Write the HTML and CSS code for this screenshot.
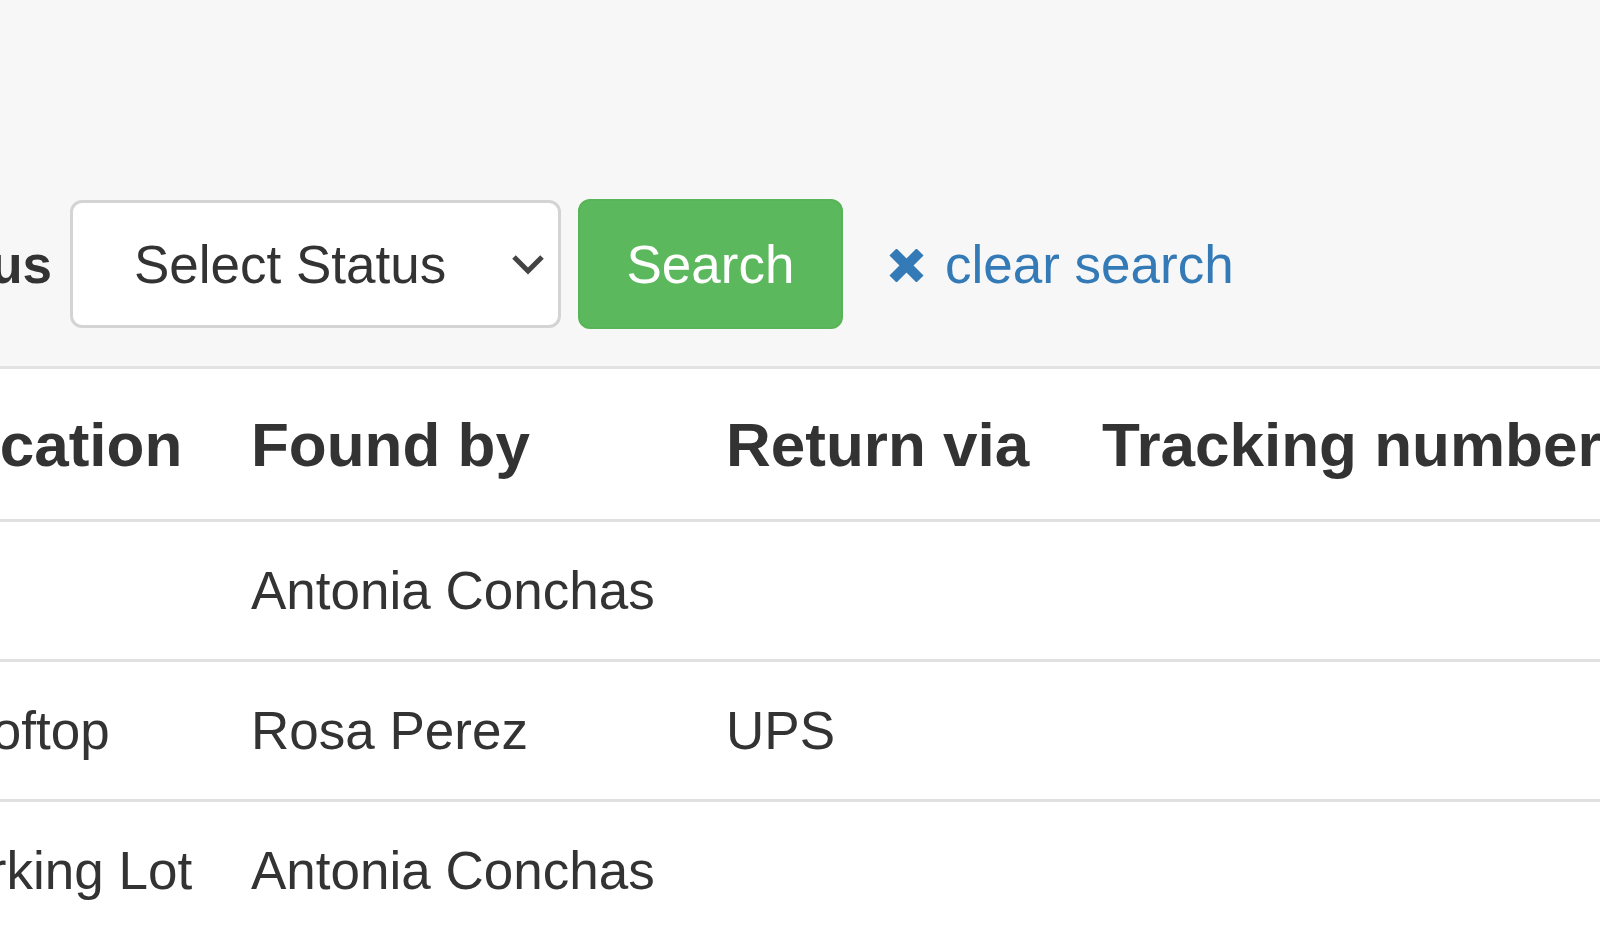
FILE: index.html
```html
<!DOCTYPE html>
<html lang="en">
<head>
<meta charset="utf-8">
<title>Found items</title>
<link rel="stylesheet" href="styles.css">
</head>
<body>
<div class="page">
  <div class="filters">
    <form class="filter-form">
      <label class="filter-label">Status</label>
      <div class="select">
        <span class="select-text">Select Status</span>
        <svg class="chevron" width="34" height="22" viewBox="0 0 34 22"><polyline points="3,4 17,18 31,4" fill="none" stroke="#444" stroke-width="5"/></svg>
      </div>
      <button type="button" class="btn-search">Search</button>
      <a class="clear-link" href="#"><svg class="clear-icon" width="35" height="33" viewBox="0 0 35 33"><path d="M4 3 L31 30 M31 3 L4 30" stroke="#337ab7" stroke-width="10" fill="none"/></svg><span>clear search</span></a>
    </form>
  </div>
  <table class="results">
    <colgroup>
      <col class="col-location">
      <col class="col-found">
      <col class="col-return">
      <col class="col-tracking">
    </colgroup>
    <thead>
      <tr><th>Location</th><th>Found by</th><th>Return via</th><th>Tracking number</th></tr>
    </thead>
    <tbody>
      <tr><td></td><td>Antonia Conchas</td><td></td><td></td></tr>
      <tr><td>Rooftop</td><td>Rosa Perez</td><td>UPS</td><td></td></tr>
      <tr><td>Parking Lot</td><td>Antonia Conchas</td><td></td><td></td></tr>
    </tbody>
  </table>
</div>
</body>
</html>
```

FILE: styles.css
```css
html, body {
  margin: 0;
  padding: 0;
  background: #fff;
}
body {
  font-family: "Liberation Sans", Arial, Helvetica, sans-serif;
  color: #333;
  overflow: hidden;
}
.page {
  width: 1600px;
  height: 937px;
  overflow: hidden;
}
.filters {
  background: #f7f7f7;
  height: 369px;
  box-sizing: border-box;
  padding-top: 199px;
  border-bottom: 3px solid #e2e2e2;
}
.filter-form {
  display: flex;
  align-items: center;
  margin: 0 0 0 -110px;
  white-space: nowrap;
}
.filter-label {
  font-weight: bold;
  font-size: 53px;
  margin-right: 18px;
}
.select {
  width: 491px;
  height: 128px;
  box-sizing: border-box;
  background: #fff;
  border: 3px solid #d4d4d4;
  border-radius: 12px;
  display: flex;
  align-items: center;
  padding-left: 61px;
  padding-right: 13px;
  font-size: 53px;
  color: #333;
}
.select-text {
  flex: 1;
}
.chevron {
  display: block;
}
.btn-search {
  margin-left: 17px;
  width: 265px;
  height: 130px;
  box-sizing: border-box;
  background: #5cb85c;
  border: 2px solid #57b557;
  border-radius: 12px;
  color: #fff;
  font-family: "Liberation Sans", Arial, Helvetica, sans-serif;
  font-size: 53px;
  padding: 0;
}
.clear-link {
  margin-left: 46px;
  display: flex;
  align-items: center;
  color: #337ab7;
  text-decoration: none;
  font-size: 53px;
}
.clear-icon {
  display: block;
  margin-right: 21px;
  margin-top: 2px;
}
.results {
  table-layout: fixed;
  border-collapse: separate;
  border-spacing: 0;
  margin-left: -106px;
  width: 1880px;
}
.col-location { width: 327px; }
.col-found { width: 475px; }
.col-return { width: 376px; }
.col-tracking { width: 702px; }
.results th,
.results td {
  text-align: left;
  vertical-align: middle;
  padding: 0 30px;
  white-space: nowrap;
  overflow: hidden;
  border-bottom: 3px solid #e0e0e0;
}
.results th {
  font-size: 62px;
  font-weight: bold;
  height: 150px;
}
.results td {
  font-size: 53px;
  height: 137px;
}
```
